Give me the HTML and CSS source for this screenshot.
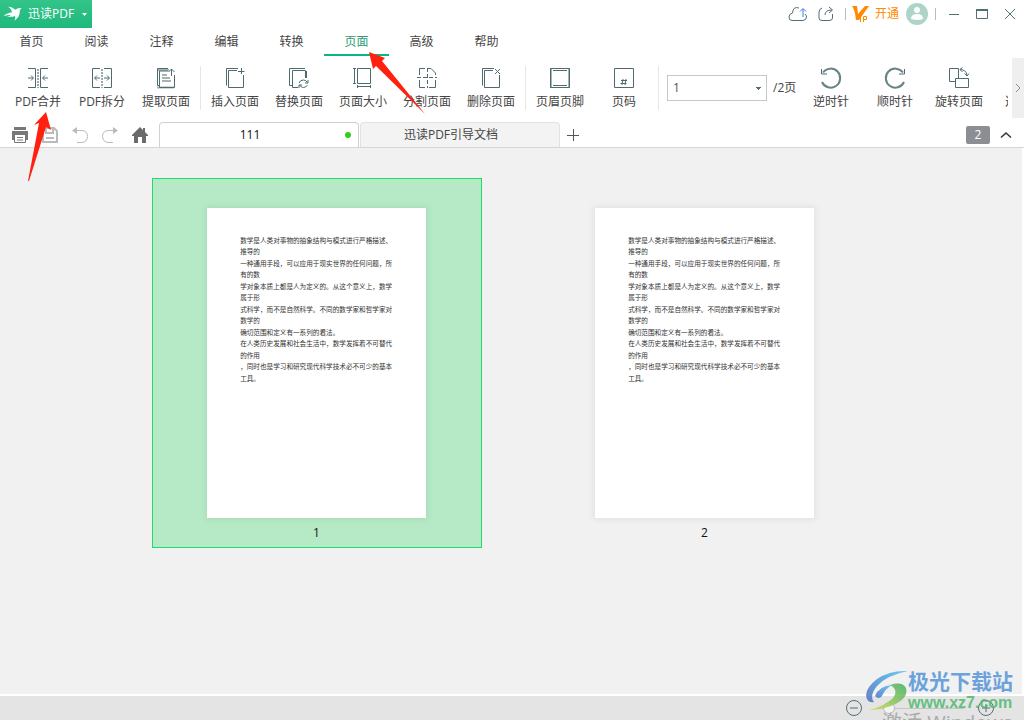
FILE: index.html
```html
<!DOCTYPE html>
<html lang="zh-CN">
<head>
<meta charset="utf-8">
<title>迅读PDF</title>
<link rel="stylesheet" href="styles.css">
</head>
<body>
<header class="titlebar">
  <button class="brand">
    <svg class="brand-logo" viewBox="8 20 58 48"><path d="M24 22Q36 22 46 31Q52 24 65 26Q58 30 59 38Q60 52 42 65Q48 56 44 50Q36 54 20 52Q28 50 32 47Q22 46 10 51Q18 42 36 39Q34 28 24 22Z"/></svg>
    <span>迅读PDF</span>
    <svg class="brand-caret" viewBox="0 0 5 3"><path d="M0 0H5L2.500 3Z"/></svg>
  </button>
  <div class="window-tools">
    <button class="tool" aria-label="云上传"><svg class="ic20" viewBox="0 0 20 20"><path d="M11 4Q5 2 4.500 9Q1 10 1 13Q1 16.500 4 16.500H15Q18.500 16 18.500 13Q18.500 11 17 10"/><path class="blue" d="M15 13V5M12 7.500L15 4.500L18 7.500"/></svg></button>
    <button class="tool share" aria-label="分享"><svg class="ic20" viewBox="0 0 20 20"><path d="M6 4Q3 5 3 8V14Q3 16.500 6 16.500H13Q16.500 16.500 16.500 14V10M9 11Q9 6 16 6M13 3L16.500 6L13 9"/></svg></button>
    <i class="bar"></i>
    <button class="vip"><svg class="vip-logo" viewBox="0 0 18 18"><path class="fill" d="M1 1H6L7 9L14 1H18L8 15H5Q4 5 1 1Z"/><path class="letters" d="M9.500 11V17M12.500 17V11.500H15.500V14.500H12.500"/></svg><span>开通</span></button>
    <button class="tool avatar" aria-label="账户"><svg viewBox="0 0 22 22"><circle cx="11" cy="11" r="11" fill="#aed4c8"/><circle cx="11" cy="7" r="3" fill="#fff"/><path d="M5 16Q5 11 11 11Q17 11 17 16Q14 17 11 17Q8 17 5 16Z" fill="#fff"/></svg></button>
    <i class="bar"></i>
    <button class="tool win" aria-label="最小化"><svg viewBox="0 0 12 12"><path d="M1 6.500H11"/></svg></button>
    <button class="tool win" aria-label="最大化"><svg viewBox="0 0 12 12"><path d="M.5 2V10.500H11.500V2"/><path class="thick" d="M0 2H12"/></svg></button>
    <button class="tool win" aria-label="关闭"><svg viewBox="0 0 12 12"><path d="M1 1L11 11M11 1L1 11"/></svg></button>
  </div>
</header>

<nav class="menu">
  <button>首页</button><button>阅读</button><button>注释</button><button>编辑</button><button>转换</button><button class="active">页面</button><button>高级</button><button>帮助</button>
</nav>

<section class="ribbon">
  <div class="ribbon-items">
    <div class="group">
      <button class="cmd"><svg viewBox="0 0 24 24"><path d="M2 2.500H9.500V21.500H2M22 2.500H14.500V21.500H22M2 12H7M5 9.500L7.500 12L5 14.500M22 12H17M19 9.500L16.500 12L19 14.500"/><path class="dash" d="M12 3V22"/></svg><span>PDF合并</span></button>
      <button class="cmd"><svg viewBox="0 0 24 24"><path d="M10 2.500H2.500V21.500H10M14 2.500H21.500V21.500H14M10 12H5M7 9.500L4.500 12L7 14.500M14 12H19M17 9.500L19.500 12L17 14.500"/><path class="dash" d="M12 3V22"/></svg><span>PDF拆分</span></button>
      <button class="cmd"><svg viewBox="0 0 24 24"><path class="soft" d="M3 4H15M8 9H13M8 12H16M8 15H17M3 21.500H20"/><path d="M14 2.500H3.500V19.500H5.500V5H14M20.500 9V21.500H5.500V19M17.500 10V3M14.500 6L17.500 3L20.500 6"/></svg><span>提取页面</span></button>
    </div>
    <i class="divider"></i>
    <div class="group">
      <button class="cmd"><svg viewBox="0 0 24 24"><path d="M15 2.500H3.500V19.500M14 4.500H5.500V21.500H20.500V9M18.500 2V8M15 5.500H21.500"/></svg><span>插入页面</span></button>
      <button class="cmd"><svg viewBox="0 0 24 24"><path d="M5 19.500H2.500V2.500H18M11 21.500H5.500V4.500H18.500V12M19.500 12V5"/><path d="M12 17Q13 14 16.500 14Q19 14 20.500 16.500M21 14V17H18M20.500 19Q19 21.500 16.500 21.500Q14 21.500 12.500 19M12 22V19H15"/></svg><span>替换页面</span></button>
      <button class="cmd"><svg viewBox="0 0 24 24"><path d="M6.500 2.500H19.500V17.500H6.500ZM3.500 2V18M2 2.500H5M2 17.500H5M6 20.500H20M6.500 19V22M19.500 19V22"/></svg><span>页面大小</span></button>
      <button class="cmd"><svg viewBox="0 0 24 24"><path d="M4.500 9V2.500H10M13 2.500H16L20.500 7V9M4.500 14V21.500H10M14 21.500H20.500V14"/><path stroke-dasharray="4 2" d="M2 11.500H22M12.500 2V22"/></svg><span>分割页面</span></button>
      <button class="cmd"><svg viewBox="0 0 24 24"><path d="M15 2.500H3.500V19.500M14 4.500H5.500V21.500H20.500V9M16 3L21 8M21 3L16 8"/></svg><span>删除页面</span></button>
    </div>
    <i class="divider"></i>
    <div class="group">
      <button class="cmd"><svg viewBox="0 0 24 24"><path class="soft" d="M3 2V22M21 2V22"/><path d="M2.500 2.500H21.500V21.500H2.500ZM5 4.500H19M5 19.500H19"/></svg><span>页眉页脚</span></button>
      <button class="cmd"><svg viewBox="0 0 24 24"><path d="M2.500 2.500H21.500V21.500H2.500Z"/><path d="M11 13L10 19M14 13L13 19M9 14.500H15M8.500 17.500H14.500"/></svg><span>页码</span></button>
    </div>
    <i class="divider"></i>
    <div class="pager">
      <select aria-label="页码选择"><option>1</option><option>2</option></select>
      <span>/2页</span>
    </div>
    <div class="group">
      <button class="cmd"><svg viewBox="0 0 24 24"><path class="turn" d="M3 16A9.500 9.500 0 1 0 4 6.500"/><path d="M2.500 3V8H8"/></svg><span>逆时针</span></button>
      <button class="cmd"><svg viewBox="0 0 24 24"><path class="turn" d="M21 16A9.500 9.500 0 1 1 20 6.500"/><path d="M21.500 3V8H16"/></svg><span>顺时针</span></button>
      <button class="cmd"><svg viewBox="0 0 24 24"><path d="M8 15.500H2.500V2.500H11.500V12M8.500 12.500H21.500V21.500H8.500ZM13 3.500Q19 3.500 20 9M15.500 1.500L13 3.500L15.500 6M17.500 7.500L20 10L22 7.500"/></svg><span>旋转页面</span></button>
      <button class="cmd"><span class="more">选页面</span></button>
    </div>
  </div>
  <button class="scroll" aria-label="向右滚动"><svg viewBox="0 0 8 12"><path d="M2 2L6 6L2 10"/></svg></button>
</section>

<section class="tabrow">
  <div class="quick">
    <button aria-label="打印"><svg viewBox="0 0 18 18"><path fill="#777" d="M3 1H15V4H3ZM1 5H17V14H15V9H3V14H1Z"/><path fill="none" stroke="#777" d="M3.500 9V16.500H14.500V9M6 11.500H12M6 14H12"/></svg></button>
    <button aria-label="保存"><svg viewBox="0 0 18 18"><path fill="none" stroke="#bbb" stroke-width="2" d="M2 2H13L16 5V16H2ZM5 2V7H12V2M5 12H13"/></svg></button>
    <button aria-label="撤销"><svg viewBox="0 0 18 18"><path fill="none" stroke="#bbb" d="M5 4.500H11Q16.500 5 16.500 10.500Q16 16 11 16.500H6"/><path fill="#bbb" d="M1 4.500L6 1V8Z"/></svg></button>
    <button aria-label="重做"><svg viewBox="0 0 18 18"><path fill="none" stroke="#bbb" d="M13 4.500H7Q1.500 5 1.500 10.500Q2 16 7 16.500H12"/><path fill="#bbb" d="M17 4.500L12 1V8Z"/></svg></button>
    <button aria-label="主页"><svg viewBox="0 0 18 18"><path fill="#6b6b6b" d="M9 1L12 4V2H14V6L17 9V10H15V17H11V11H7V17H3V10H1V9Z"/></svg></button>
  </div>
  <div class="tabs">
    <button class="tab current"><span>111</span><i class="dot"></i></button>
    <button class="tab"><span>迅读PDF引导文档</span></button>
    <button class="plus" aria-label="新建标签"><svg viewBox="0 0 12 12"><path d="M0 6.500H12M6.500 0V12"/></svg></button>
  </div>
  <span class="count">2</span>
  <button class="collapse" aria-label="收起"><svg viewBox="0 0 12 8"><path d="M1 6.500L6 2L11 6.500"/></svg></button>
</section>

<main class="canvas">
  <figure class="thumb selected">
    <svg class="sheet" viewBox="0 0 595 842">
      <g class="sheet-text">
        <text x="90" y="94">数学是人类对事物的抽象结构与模式进行严格描述、</text>
        <text x="90" y="125">推导的</text>
        <text x="90" y="157">一种通用手段，可以应用于现实世界的任何问题，所</text>
        <text x="90" y="188">有的数</text>
        <text x="90" y="219">学对象本质上都是人为定义的。从这个意义上，数学</text>
        <text x="90" y="250">属于形</text>
        <text x="90" y="282">式科学，而不是自然科学。不同的数学家和哲学家对</text>
        <text x="90" y="313">数学的</text>
        <text x="90" y="344">确切范围和定义有一系列的看法。</text>
        <text x="90" y="375">在人类历史发展和社会生活中，数学发挥着不可替代</text>
        <text x="90" y="407">的作用</text>
        <text x="90" y="438">，同时也是学习和研究现代科学技术必不可少的基本</text>
        <text x="90" y="469">工具。</text>
      </g>
    </svg>
    <figcaption>1</figcaption>
  </figure>
  <figure class="thumb">
    <svg class="sheet" viewBox="0 0 595 842">
      <g class="sheet-text">
        <text x="90" y="94">数学是人类对事物的抽象结构与模式进行严格描述、</text>
        <text x="90" y="125">推导的</text>
        <text x="90" y="157">一种通用手段，可以应用于现实世界的任何问题，所</text>
        <text x="90" y="188">有的数</text>
        <text x="90" y="219">学对象本质上都是人为定义的。从这个意义上，数学</text>
        <text x="90" y="250">属于形</text>
        <text x="90" y="282">式科学，而不是自然科学。不同的数学家和哲学家对</text>
        <text x="90" y="313">数学的</text>
        <text x="90" y="344">确切范围和定义有一系列的看法。</text>
        <text x="90" y="375">在人类历史发展和社会生活中，数学发挥着不可替代</text>
        <text x="90" y="407">的作用</text>
        <text x="90" y="438">，同时也是学习和研究现代科学技术必不可少的基本</text>
        <text x="90" y="469">工具。</text>
      </g>
    </svg>
    <figcaption>2</figcaption>
  </figure>
</main>

<footer class="status">
  <button class="round" aria-label="缩小"><svg viewBox="0 0 16 16"><circle cx="8" cy="8" r="7.500"/><path d="M4 8H12"/></svg></button>
  <input class="zoom" type="range" min="0" max="100" value="15" aria-label="缩放">
  <button class="round" aria-label="放大"><svg viewBox="0 0 16 16"><circle cx="8" cy="8" r="7.500"/><path d="M4 8H12M8 4V12"/></svg></button>
</footer>

<div class="activate">激活 Windows</div>
<div class="watermark">
  <svg viewBox="0 0 44 42">
    <defs>
      <linearGradient id="wb" x1="1" y1="0" x2="0" y2="1"><stop offset="0" stop-color="#4fc4f0"/><stop offset="1" stop-color="#4d6fc0"/></linearGradient>
      <linearGradient id="wg" x1="1" y1="0" x2="0" y2="1"><stop offset="0" stop-color="#3fae62"/><stop offset="1" stop-color="#d6dd55"/></linearGradient>
    </defs>
    <path fill="url(#wb)" d="M43 1Q25 0 12 9Q-2 20 2 29Q4 33 9 32Q4 26 12 16Q22 5 43 1Z"/>
    <path fill="url(#wb)" d="M10 26Q14 16 27 15Q20 19 17 26Q14 30 10 26Z"/>
    <path fill="url(#wg)" d="M25 15Q37 11 41 18Q44 29 26 36Q15 40 4 40Q20 36 28 28Q34 20 25 15Z"/>
  </svg>
  <div class="wm-text"><b>极光下载站</b><b class="url">www.xz7.com</b></div>
</div>
<svg class="pointer one" viewBox="0 0 24 70"><path d="M18 0L23 18L18 15L1 69H0L11 11L6 13Z"/></svg>
<svg class="pointer two" viewBox="0 0 57 63"><path d="M0 0L16 6L13 9L56 62L7 14L4 17Z"/></svg>
</body>
</html>
```
FILE: styles.css
```css
* { box-sizing: border-box; }
body {
  margin: 0;
  height: 100vh;
  display: flex;
  flex-direction: column;
  position: relative;
  overflow: hidden;
  background: #fff;
  color: #444;
  font: 12px/16px "Open Sans", "Noto Sans CJK SC", sans-serif;
}
button {
  border: 0;
  padding: 0;
  margin: 0;
  background: none;
  color: inherit;
  font: inherit;
  flex: none;
}
svg { display: block; }

.titlebar { display: flex; justify-content: space-between; height: 28px; flex: none; }
.brand {
  display: flex;
  align-items: center;
  width: 92px;
  padding-left: 3px;
  background: linear-gradient(#33c489, #1fb87c);
  color: #fff;
}
.brand-logo { width: 19px; height: 16px; fill: #fff; margin-right: 6px; }
.brand-caret { width: 5px; height: 3px; fill: #fff; margin-left: 8px; }
.window-tools { display: flex; align-items: center; padding-right: 8px; }
.tool svg, .win svg { fill: none; stroke: #546e75; }
.ic20 { width: 20px; height: 20px; }
.tool .blue { stroke: #3b7ff0; }
.share { margin: 0 9px 0 8px; }
.bar { width: 1px; height: 12px; background: #bbb; }
.vip { display: flex; align-items: center; gap: 6px; margin: 0 7px 0 5px; color: #ff8a00; }
.vip-logo { width: 18px; height: 18px; }
.vip-logo .fill { fill: #ff8a00; }
.vip-logo .letters { fill: none; stroke: #ff8a00; }
.avatar { margin-right: 7px; }
.avatar svg { width: 22px; height: 22px; stroke: none; }
.win { margin-left: 16px; }
.bar + .win { margin-left: 12px; }
.win svg { width: 12px; height: 12px; }
.win .thick { stroke-width: 2px; }

.menu { display: flex; height: 30px; flex: none; margin-left: -1px; }
.menu button { width: 65px; height: 28px; padding-top: 2px; border-bottom: 2px solid transparent; }
.menu .active { border-color: #0bb585; color: #2f9a72; }

.ribbon { display: flex; height: 60px; flex: none; }
.ribbon-items { display: flex; flex: 1; min-width: 0; overflow: hidden; padding-left: 6px; margin-right: 4px; }
.group { display: flex; flex: none; }
.cmd { width: 64px; display: flex; flex-direction: column; align-items: center; padding-top: 8px; gap: 4px; white-space: nowrap; }
.cmd svg { width: 24px; height: 24px; fill: none; stroke: #4f6b70; }
.cmd .dash { stroke: #9aabae; stroke-width: 2px; stroke-dasharray: 2 1; }
.cmd .soft { stroke: #a5b5b6; stroke-width: 2px; }
.cmd .turn { stroke-width: 2px; stroke: #6b8388; }
.more { padding-top: 28px; }
.divider { flex: none; width: 1px; height: 44px; margin: 8px 2px; background: #e6e6e6; }
.pager { display: flex; align-items: center; width: 138px; padding-left: 6px; gap: 6px; flex: none; }
.pager select {
  appearance: none;
  width: 100px;
  height: 26px;
  padding: 0 5px;
  border: 1px solid #c6c6c6;
  border-radius: 0;
  color: #555;
  font: inherit;
  background: linear-gradient(#546e75, #546e75) right 6px top 12px / 3px 1px no-repeat, linear-gradient(#546e75, #546e75) right 5px top 11px / 5px 1px no-repeat, linear-gradient(#546e75, #546e75) right 7px top 13px / 1px 1px no-repeat #fff;
}
.scroll { width: 12px; background: #efefef; }
.scroll svg { width: 8px; height: 12px; margin: 0 auto; fill: none; stroke: #7f9194; }

.tabrow { display: flex; height: 30px; flex: none; padding-top: 4px; border-bottom: 1px solid #d6d6d6; }
.quick { display: flex; gap: 12px; padding-left: 11px; width: 159px; align-items: center; flex: none; }
.quick svg { width: 18px; height: 18px; }
.tabs { display: flex; flex: 1; gap: 1px; }
.tab {
  display: flex;
  align-items: center;
  justify-content: center;
  position: relative;
  width: 200px;
  padding-right: 18px;
  border: 1px solid #e2e2e2;
  border-bottom: 0;
  border-radius: 4px 4px 0 0;
  background: #f3f3f3;
}
.tab.current { border-color: #cfd2d2; background: #fff; color: #111; }
.dot { position: absolute; right: 7px; top: 9px; width: 6px; height: 6px; border-radius: 50%; background: #31cc1e; }
.plus { padding: 0 6px; }
.plus svg { width: 12px; height: 12px; fill: none; stroke: #555; }
.count { align-self: center; width: 24px; height: 18px; border-radius: 2px; background: #8b8f93; color: #fff; text-align: center; line-height: 18px; }
.collapse { padding: 0 12px 0 10px; }
.collapse svg { width: 12px; height: 8px; fill: none; stroke: #333; stroke-width: 1.5; }

.canvas {
  flex: 1;
  min-height: 0;
  display: flex;
  justify-content: center;
  align-items: flex-start;
  gap: 58px;
  padding-top: 30px;
  background: #f1f1f1;
  border-right: 2px solid #fff;
}
.thumb {
  margin: 0;
  width: 330px;
  height: 370px;
  display: flex;
  flex-direction: column;
  align-items: center;
  padding: 29px 1px 0 0;
  border: 1px solid transparent;
}
.thumb.selected { background: #b6eac6; border-color: #21dc6d; }
.sheet { width: 219px; height: 310px; background: #fff; box-shadow: 0 0 6px 2px rgba(0, 0, 0, .06); }
.sheet-text { font: 18px "Noto Sans CJK SC", sans-serif; fill: #333; }
.thumb figcaption { margin-top: 7px; color: #111; }

.status {
  display: flex;
  justify-content: flex-end;
  align-items: center;
  gap: 8px;
  height: 26px;
  flex: none;
  padding-right: 30px;
  border-top: 2px solid #fff;
  background: #e4e4e4;
}
.round svg { width: 16px; height: 16px; fill: none; stroke: #546e75; }
.zoom {
  appearance: none;
  width: 100px;
  height: 14px;
  margin: 0;
  background: linear-gradient(#c4c4c4, #c4c4c4) center / 88px 1px no-repeat;
}
.zoom::-webkit-slider-thumb { appearance: none; width: 12px; height: 12px; border: 1px solid #bbb; border-radius: 50%; background: #f4f4f4; }

.activate { position: absolute; left: 882px; top: 711px; color: #aaa; font-size: 20px; line-height: 24px; white-space: nowrap; }
.watermark { position: absolute; right: 11px; bottom: 8px; display: flex; opacity: .85; pointer-events: none; }
.watermark svg { width: 44px; height: 42px; margin-right: -1px; }
.wm-text { display: flex; flex-direction: column; font-family: "Liberation Sans", "Noto Sans CJK SC", sans-serif; }
.wm-text b { color: #5595d8; font-size: 21px; line-height: 24px; white-space: nowrap; }
.wm-text .url { color: #4dba70; font-size: 16px; line-height: 18px; }
.pointer { position: absolute; fill: #ff2010; pointer-events: none; }
.one { left: 28px; top: 112px; width: 24px; height: 70px; }
.two { left: 369px; top: 52px; width: 57px; height: 63px; }
```
